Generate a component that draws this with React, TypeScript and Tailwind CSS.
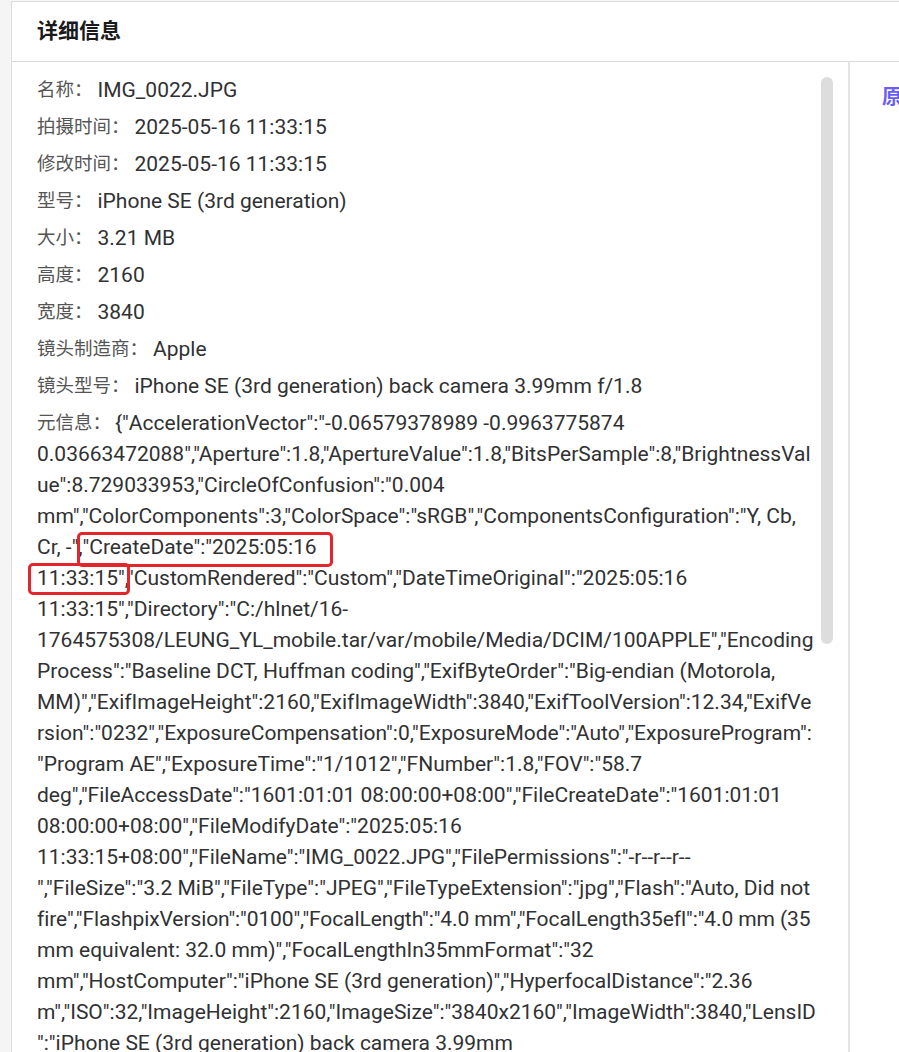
import React from "react";

const font = { fontFamily: "Roboto, 'Noto Sans CJK SC', sans-serif" };

const rows: { label: string; value: string }[] = [
	{ label: "名称：", value: "IMG_0022.JPG" },
	{ label: "拍摄时间：", value: "2025-05-16 11:33:15" },
	{ label: "修改时间：", value: "2025-05-16 11:33:15" },
	{ label: "型号：", value: "iPhone SE (3rd generation)" },
	{ label: "大小：", value: "3.21 MB" },
	{ label: "高度：", value: "2160" },
	{ label: "宽度：", value: "3840" },
	{ label: "镜头制造商：", value: "Apple" },
	{ label: "镜头型号：", value: "iPhone SE (3rd generation) back camera 3.99mm f/1.8" },
];

const metaBefore =
	'{"AccelerationVector":"-0.06579378989 -0.9963775874 0.03663472088","Aperture":1.8,"ApertureValue":1.8,"BitsPerSample":8,"BrightnessValue":8.729033953,"CircleOfConfusion":"0.004 mm","ColorComponents":3,"ColorSpace":"sRGB","ComponentsConfiguration":"Y, Cb, Cr, -",';
const metaMarked1 = '"CreateDate":"2025:05:16';
const metaMarked2 = '11:33:15",';
const metaMid =
	'"CustomRendered":"Custom","DateTimeOriginal":"2025:05:16 11:33:15","Directory":"C:/hlnet/16-1764575308/LEUNG_YL_mobile.tar/var/mobile/Media/DCIM/100APPLE","EncodingProcess":"Baseline DCT, Huffman coding","ExifByteOrder":"Big-endian (Motorola, MM)","ExifImageHeight":2160,"ExifImageWidth":3840,"ExifToolVersion":12.34,"ExifVersion":"0232","ExposureCompensation":0,"ExposureMode":"Auto","ExposureProgram":"Program AE","ExposureTime":"1/1012","FNumber":1.8,"FOV":"58.7 deg","FileAccessDate":"1601:01:01 08:00:00+08:00","FileCreateDate":"1601:01:01 08:00:00+08:00","FileModifyDate":"2025:05:16 11:33:15+08:00","FileName":"IMG_0022.JPG","FilePermissions":"-r--r--r--","FileSize":"3.2 MiB","FileType":"JPEG","FileTypeExtension":"jpg","Flash":"Auto, Did not ';
// this stretch wraps a hair tighter in the original rendering
const metaTight = 'fire","FlashpixVersion":"0100","FocalLength":"4.0 mm","FocalLength35efl":"4.0 mm (35';
const metaLens =
	' mm equivalent: 32.0 mm)","FocalLengthIn35mmFormat":"32 mm","HostComputer":"iPhone SE (3rd generation)","HyperfocalDistance":"2.36 m","ISO":32,"ImageHeight":2160,"ImageSize":"3840x2160","ImageWidth":3840,"LensID":"iPhone SE (3rd generation) back camera 3.99mm ';
const metaNoBreak = 'f/1.8","LensInfo":"1.539999962-3.99mm';
const metaAfter =
	' f/1.8-2.4","LensMake":"Apple","LensModel":"iPhone SE (3rd generation) back camera 3.99mm f/1.8"}';

export default function App() {
	return (
		<div
			className="h-[1052px] w-[899px] overflow-hidden bg-[#f5f5f5] pl-[11px] pt-[1px]"
			style={font}
		>
			<div className="h-[1100px] w-[1000px] border border-[#dcdcdc] bg-white">
				<div className="flex h-[60px] items-center border-b border-[#dcdcdc] pl-[25px]">
					<h2 className="text-[21px] font-bold text-[#1a1a1a]">详细信息</h2>
				</div>

				<div className="flex h-full">
					<div className="flex w-[838px] shrink-0 border-r-2 border-[#e4e4e4]">
						<div className="min-w-0 flex-1 pl-[25px] pr-[3.5px] pt-[13px] text-[21px] text-[#303133]">
							{rows.map((r) => (
								<div key={r.label} className="mb-[6px] h-[31px] leading-[31px]">
									<span className="mr-[5px] align-top text-[18.5px] text-[#555]">
										{r.label}
									</span>
									<span>{r.value}</span>
								</div>
							))}
							<div className="leading-[31px] [overflow-wrap:break-word]">
								<span className="mr-[4px] align-top text-[18.5px] text-[#555]">
									元信息：
								</span>
								{metaBefore}
								<span className="-ml-[3px] -mr-[13px] rounded-[2px] pb-[5px] pl-[3px] pr-[13px] outline-[3px] outline-[#e3262b] outline-solid">
									{metaMarked1}
								</span>{" "}
								<span className="-ml-[6px] rounded-[2px] pb-[2px] pl-[6px] outline-[3px] outline-[#e3262b] outline-solid">
									{metaMarked2}
								</span>
								{metaMid}
								<span className="tracking-[-0.1px]">{metaTight}</span>
								{metaLens}
								<span className="whitespace-nowrap">{metaNoBreak}</span>
								{metaAfter}
							</div>
						</div>
						<div className="mr-[15px] w-[12px] shrink-0 pt-[15px]">
							<div className="h-[567px] w-[12px] rounded-full bg-[#dddddd]" />
						</div>
					</div>

					<div className="pl-[32px] pt-[21px]">
						<span className="text-[20px] font-bold leading-[28px] text-[#6b5cf6]">
							原始图片
						</span>
					</div>
				</div>
			</div>
		</div>
	);
}
